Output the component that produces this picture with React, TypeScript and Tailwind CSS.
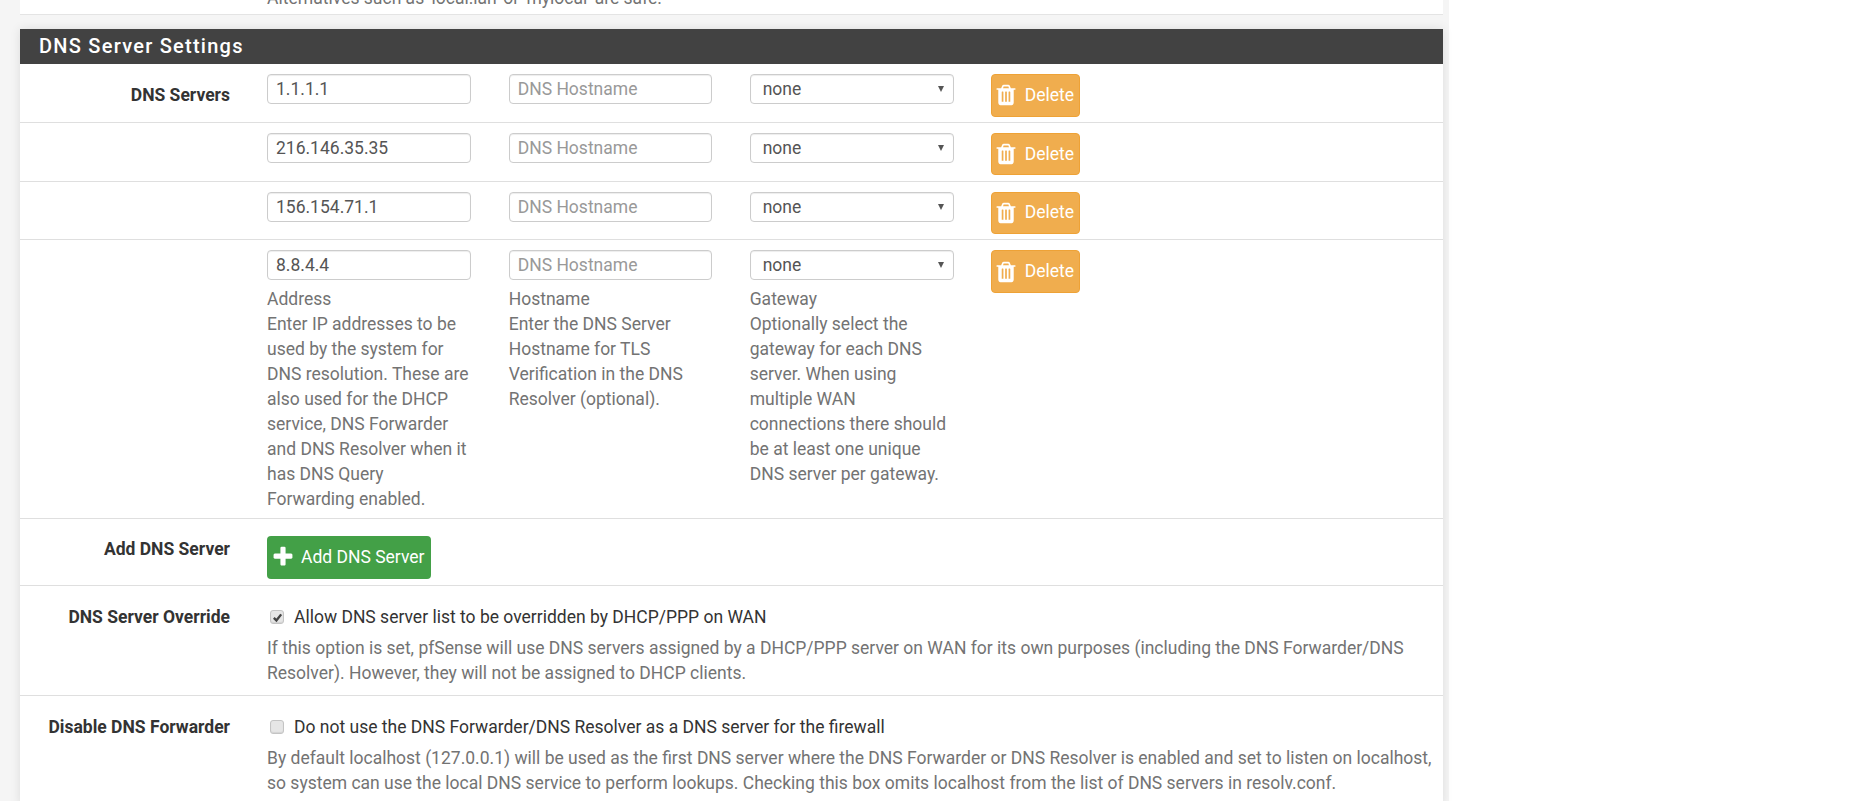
import type { ReactNode } from 'react';

const trashPath =
  'M704 1376v-704q0-14-9-23t-23-9h-64q-14 0-23 9t-9 23v704q0 14 9 23t23 9h64q14 0 23-9t9-23zm256 0v-704q0-14-9-23t-23-9h-64q-14 0-23 9t-9 23v704q0 14 9 23t23 9h64q14 0 23-9t9-23zm256 0v-704q0-14-9-23t-23-9h-64q-14 0-23 9t-9 23v704q0 14 9 23t23 9h64q14 0 23-9t9-23zm-544-992h448l-48-117q-7-9-17-11h-317q-10 2-17 11zm928 32v64q0 14-9 23t-23 9h-96v948q0 83-47 143.5t-113 60.5h-832q-66 0-113-58.5t-47-141.5v-952h-96q-14 0-23-9t-9-23v-64q0-14 9-23t23-9h309l70-167q15-37 54-63t79-26h320q40 0 79 26t54 63l70 167h309q14 0 23 9t9 23z';
const plusPath =
  'M1600 736v192q0 40-28 68t-68 28h-416v416q0 40-28 68t-68 28h-192q-40 0-68-28t-28-68v-416h-416q-40 0-68-28t-28-68v-192q0-40 28-68t68-28h416v-416q0-40 28-68t68-28h192q40 0 68 28t28 68v416h416q40 0 68 28t28 68z';

function DeleteButton() {
  return (
    <button className="flex h-[42.5px] w-[89px] items-center rounded-[4px] border border-[#eea236] bg-[#f0ad4e] pl-[2.5px] text-white">
      <svg viewBox="0 0 1792 1792" className="h-[24px] w-[24px] fill-white">
        <path d={trashPath} />
      </svg>
      <span className="ml-[6.5px]">Delete</span>
    </button>
  );
}

function Field({ value, placeholder }: { value?: string; placeholder?: string }) {
  return (
    <input
      readOnly
      value={value}
      placeholder={placeholder}
      className="h-[30px] w-full rounded-[4px] border border-[#ccc] px-[8px] text-[#555] shadow-[inset_0_1px_1px_rgba(0,0,0,0.075)] outline-none placeholder:text-[#999]"
    />
  );
}

function GatewaySelect() {
  return (
    <div className="relative h-[30px] w-[204px] rounded-[4px] border border-[#ccc] pl-[12px] leading-[28px] text-[#555] shadow-[inset_0_1px_1px_rgba(0,0,0,0.075)]">
      none
      <span className="absolute right-[9px] top-[11px] h-0 w-0 border-x-[3px] border-t-[6px] border-x-transparent border-t-[#555]" />
    </div>
  );
}

function HelpBlock({ children }: { children: ReactNode }) {
  return <div className="mt-[7px] w-[204px] text-[#737373]">{children}</div>;
}

function ServerRow({
  address,
  label,
  help,
}: {
  address: string;
  label?: string;
  help?: boolean;
}) {
  return (
    <div className="flex border-b border-[#dfdfdf] pt-[10px] pb-[5.25px]">
      <div className="w-[210px] pt-[8.5px] text-right font-bold text-[#333]">{label}</div>
      <div className="ml-[37px] flex gap-[37px]">
        <div className="w-[204.7px] pr-[0.7px]">
          <Field value={address} />
          {help && (
            <HelpBlock>
              Address
              <br />
              Enter IP addresses to be used by the system for DNS resolution. These are also used for the DHCP service, DNS Forwarder and DNS Resolver when it has DNS Query Forwarding enabled.
            </HelpBlock>
          )}
        </div>
        <div className="w-[204px] pr-[1px]">
          <Field placeholder="DNS Hostname" />
          {help && (
            <HelpBlock>
              Hostname
              <br />
              Enter the DNS Server Hostname for TLS Verification in the DNS Resolver (optional).
            </HelpBlock>
          )}
        </div>
        <div className="w-[204px]">
          <GatewaySelect />
          {help && (
            <HelpBlock>
              Gateway
              <br />
              Optionally select the gateway for each DNS server. When using multiple WAN connections there should be at least one unique DNS server per gateway.
            </HelpBlock>
          )}
        </div>
        <DeleteButton />
      </div>
    </div>
  );
}

function CheckRow({
  label,
  text,
  checked,
  children,
}: {
  label: string;
  text: string;
  checked?: boolean;
  children: ReactNode;
}) {
  return (
    <div className="flex border-b border-[#dfdfdf] pt-[19px] pb-[9px]">
      <div className="w-[210px] text-right font-bold text-[#333]">{label}</div>
      <div className="ml-[37px] flex-1">
        <label className="flex items-center text-[#333]">
          <span className="ml-[3px] mr-[10px] flex h-[14px] w-[14px] items-center justify-center rounded-[3px] border border-[#c4c4c4] bg-[#e6e6e6] shadow-[inset_0_-1px_1px_rgba(0,0,0,0.08)]">
            {checked && (
              <svg viewBox="0 0 12 12" className="h-[11px] w-[11px] fill-none stroke-[#444] stroke-[2.6]">
                <path d="M2 6.5 L4.8 9.2 L10 2.6" />
              </svg>
            )}
          </span>
          {text}
        </label>
        <div className="mt-[6px] pr-[8px] text-[#737373]">{children}</div>
      </div>
    </div>
  );
}

export default function App() {
  return (
    <div className="h-[801px] overflow-hidden bg-white font-['Roboto',sans-serif] text-[17.5px] leading-[25px]">
      <div className="h-full w-[1449px] bg-[#f5f5f5] pl-[20px] pr-[6px]">
        <div className="flex h-[15px] items-end overflow-hidden border-b border-[#e4e4e4] bg-white pl-[247px]">
          <div className="mb-[3.5px] shrink-0 text-[#737373]">
            Alternatives such as 'local.lan' or 'mylocal' are safe.
          </div>
        </div>
        <div className="mt-[14px] bg-white shadow-[0_0_10px_rgba(0,0,0,0.1)]">
          <h2 className="flex h-[35px] items-center bg-[#424242] pl-[19px] text-[20px] font-medium tracking-[1.25px] text-white">
            DNS Server Settings
          </h2>
          <ServerRow address="1.1.1.1" label="DNS Servers" />
          <ServerRow address="216.146.35.35" />
          <ServerRow address="156.154.71.1" />
          <ServerRow address="8.8.4.4" help />
          <div className="flex h-[67px] border-b border-[#dfdfdf] pt-[17px]">
            <div className="w-[210px] pt-[1px] text-right font-bold text-[#333]">Add DNS Server</div>
            <button className="ml-[37px] flex h-[43px] w-[164px] items-center rounded-[4px] bg-[#43a047] pl-[3.5px] text-white">
              <svg viewBox="0 0 1792 1792" className="h-[24px] w-[24px] fill-white">
                <path d={plusPath} />
              </svg>
              <span className="ml-[6.5px]">Add DNS Server</span>
            </button>
          </div>
          <CheckRow
            label="DNS Server Override"
            text="Allow DNS server list to be overridden by DHCP/PPP on WAN"
            checked
          >
            If this option is set, pfSense will use DNS servers assigned by a DHCP/PPP server on WAN for its own purposes (including the DNS Forwarder/DNS Resolver). However, they will not be assigned to DHCP clients.
          </CheckRow>
          <CheckRow
            label="Disable DNS Forwarder"
            text="Do not use the DNS Forwarder/DNS Resolver as a DNS server for the firewall"
          >
            By default localhost (127.0.0.1) will be used as the first DNS server where the DNS Forwarder or DNS Resolver is enabled and set to listen on localhost, so system can use the local DNS service to perform lookups. Checking this box omits localhost from the list of DNS servers in resolv.conf.
          </CheckRow>
        </div>
      </div>
    </div>
  );
}
